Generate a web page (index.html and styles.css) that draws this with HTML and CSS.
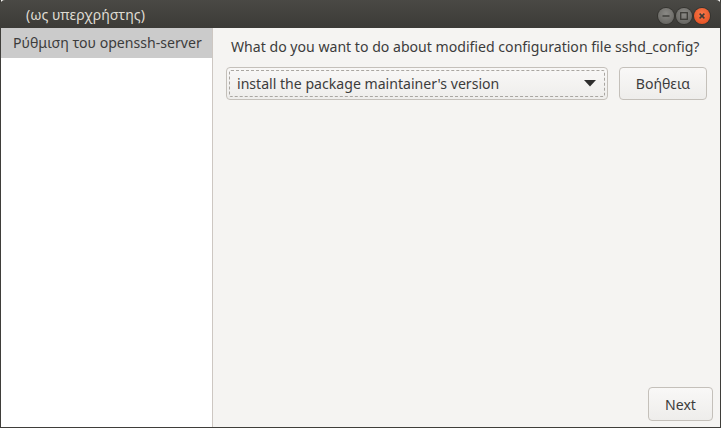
FILE: index.html
```html
<!DOCTYPE html>
<html>
<head>
<meta charset="utf-8">
<link rel="stylesheet" href="styles.css">
</head>
<body>
<div class="window">
  <div class="titlebar">
    <span class="title">(ως υπερχρήστης)</span>
    <div class="controls">
      <span class="wbtn">
        <svg width="16" height="16" viewBox="0 0 16 16"><line x1="4.5" y1="8" x2="11.5" y2="8" stroke="#3c3b37" stroke-width="1.4"/></svg>
      </span>
      <span class="wbtn">
        <svg width="16" height="16" viewBox="0 0 16 16"><rect x="4.7" y="4.7" width="6.6" height="6.6" fill="none" stroke="#3c3b37" stroke-width="1.3"/></svg>
      </span>
      <span class="wbtn close">
        <svg width="16" height="16" viewBox="0 0 16 16"><path d="M5.6 5.6 L10.4 10.4 M10.4 5.6 L5.6 10.4" stroke="#3c3b37" stroke-width="1.5"/></svg>
      </span>
    </div>
  </div>
  <div class="body">
    <div class="sidebar">
      <div class="side-item selected">Ρύθμιση του openssh-server</div>
    </div>
    <div class="main">
      <div class="question">What do you want to do about modified configuration file sshd_config?</div>
      <div class="row">
        <div class="combo">
          <div class="focus">
            <span class="combo-text">install the package maintainer's version</span>
            <svg class="arrow" width="12" height="7" viewBox="0 0 12 7"><path d="M0 0 L12 0 L6 6.5 Z" fill="#2e2e2e"/></svg>
          </div>
        </div>
        <button class="btn help">Βοήθεια</button>
      </div>
      <div class="spacer"></div>
      <div class="footer">
        <button class="btn next">Next</button>
      </div>
    </div>
  </div>
</div>
</body>
</html>
```
FILE: styles.css
```css
html, body {
  margin: 0;
  padding: 0;
}
body {
  width: 721px;
  height: 428px;
  overflow: hidden;
  font-family: "Noto Sans", "DejaVu Sans", sans-serif;
  font-size: 14.1px;
  color: #3c3c3c;
}
.window {
  width: 721px;
  height: 428px;
  box-sizing: border-box;
  display: flex;
  flex-direction: column;
  border: 1px solid #3f3e3a;
  border-top: none;
  background: #f5f4f2;
}
.titlebar {
  height: 28px;
  margin: 0 -1px;
  flex: none;
  background: linear-gradient(#4a4945, #3c3b37);
  border-radius: 5px 5px 0 0;
  display: flex;
  align-items: center;
  justify-content: space-between;
  padding: 0 11px 0 26px;
}
.title {
  color: #dfdbd2;
  font-size: 14.1px;
}
.controls {
  display: flex;
  gap: 2px;
  margin-top: 4px;
}
.wbtn {
  width: 16px;
  height: 16px;
  border-radius: 50%;
  background: radial-gradient(circle at 50% 35%, #8a8985, #5e5d59);
  box-shadow: 0 0 0 1px #353430;
  display: flex;
}
.wbtn.close {
  background: radial-gradient(circle at 50% 35%, #f7784a, #e2491a);
}
.body {
  flex: 1;
  display: flex;
  min-height: 0;
}
.sidebar {
  width: 211px;
  flex: none;
  background: #ffffff;
  border-right: 1px solid #cdc7c2;
}
.side-item {
  height: 30px;
  line-height: 30px;
  padding-left: 12px;
  white-space: nowrap;
}
.side-item.selected {
  background: #cbcbcb;
  color: #3c3c3c;
}
.main {
  flex: 1;
  display: flex;
  flex-direction: column;
  padding: 9px 13px 6px 13px;
}
.question {
  padding-left: 5px;
  line-height: 20px;
  white-space: nowrap;
}
.row {
  display: flex;
  margin-top: 10px;
  gap: 11px;
}
.combo {
  width: 382px;
  height: 33px;
  box-sizing: border-box;
  border: 1px solid #c4c0ba;
  border-radius: 4px;
  background: linear-gradient(#f9f8f7, #eeedeb);
  padding: 2px;
}
.focus {
  height: 100%;
  box-sizing: border-box;
  border: 1px dashed #a9a6a1;
  border-radius: 2px;
  display: flex;
  align-items: center;
  justify-content: space-between;
  padding: 0 8px 0 7px;
}
.combo-text {
  white-space: nowrap;
}
.btn {
  font-family: inherit;
  font-size: 14.1px;
  color: #3c3c3c;
  border: 1px solid #c4c0ba;
  border-radius: 4px;
  background: linear-gradient(#f9f8f7, #eeedeb);
  height: 33px;
  padding: 0;
}
.help {
  width: 88px;
}
.spacer {
  flex: 1;
}
.footer {
  display: flex;
  justify-content: flex-end;
  margin-right: -6px;
}
.next {
  width: 65px;
  height: 34px;
}
```
